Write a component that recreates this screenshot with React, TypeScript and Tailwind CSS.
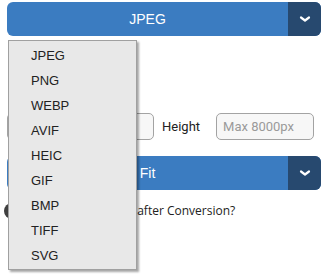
const formats = ["JPEG", "PNG", "WEBP", "AVIF", "HEIC", "GIF", "BMP", "TIFF", "SVG"];

function Chevron() {
  return (
    <svg width="12" height="8" viewBox="0 0 12 8" fill="none">
      <path d="M2 2.5 L6 5.5 L10 2.5" stroke="white" strokeWidth="2.2" strokeLinecap="round" strokeLinejoin="round" />
    </svg>
  );
}

function SelectBar({ label }: { label: string }) {
  return (
    <div className="flex h-[34px] w-full overflow-hidden rounded-[6px] bg-[#3b7cc1] text-white">
      <div className="flex flex-1 items-center justify-center text-[14px] font-['Liberation_Sans',Arial,sans-serif]">
        {label}
      </div>
      <div className="flex w-[33px] items-center justify-center bg-[#27496f]">
        <Chevron />
      </div>
    </div>
  );
}

export default function App() {
  return (
    <div className="relative h-[274px] w-[328px] overflow-hidden bg-white font-['Roboto',sans-serif]">
      <div className="flex flex-col px-[7px] pt-[2px]">
        <SelectBar label="JPEG" />

        <div className="h-[77px]" />

        <div className="flex h-[27px] items-center">
          <input
            className="h-[27px] w-[147px] rounded-[5px] border border-[#a3a3a3] bg-[#f7f7f7] px-2 text-[13px] outline-none"
            placeholder="Max 8000px"
          />
          <span className="ml-[8px] text-[13px] text-[#222]">Height</span>
          <input
            className="ml-[16px] h-[27px] w-[98px] rounded-[5px] border border-[#a3a3a3] bg-[#f7f7f7] px-[6px] text-[13px] text-[#222] outline-none placeholder:text-[#9a9a9a]"
            placeholder="Max 8000px"
          />
        </div>

        <div className="mt-[16px]">
          <SelectBar label="Fit" />
        </div>

        <div className="mt-[12px] flex items-center">
          <div className="-ml-[3px] h-[16px] w-[34px] rounded-full bg-[#3f3f3f]" />
          <span className="ml-[32px] text-[12px] text-[#222] font-['Open_Sans',sans-serif]">
            Delete Files after Conversion?
          </span>
        </div>
      </div>

      <div className="absolute left-[8px] top-[40px] w-[129px] border border-[#a0a0a0] bg-[#e8e8e8] pt-[2px] pb-[1px] shadow-[2px_2px_2px_rgba(0,0,0,0.35)]">
        {formats.map((f) => (
          <div
            key={f}
            className="flex h-[25px] items-center pl-[22px] text-[13px] text-[#222] font-['Liberation_Sans',Arial,sans-serif]"
          >
            {f}
          </div>
        ))}
      </div>
    </div>
  );
}
